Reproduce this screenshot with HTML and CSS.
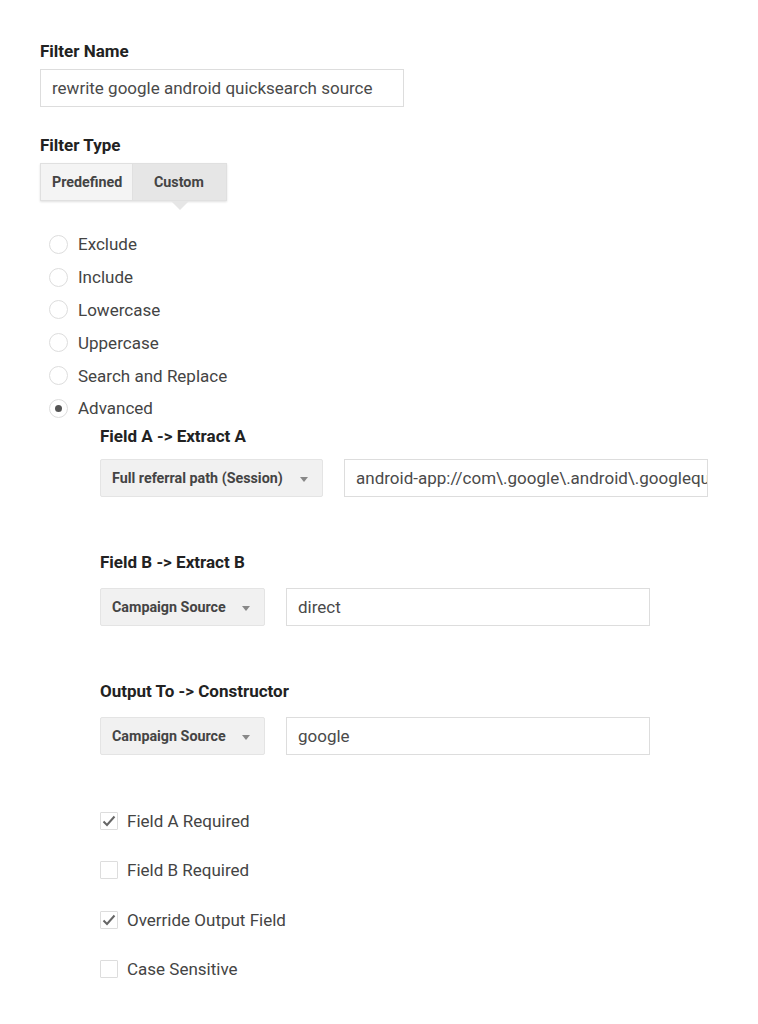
FILE: index.html
```html
<!DOCTYPE html>
<html>
<head>
<meta charset="utf-8">
<link rel="stylesheet" href="styles.css">
</head>
<body>
<div class="page">
  <div class="label">Filter Name</div>
  <div class="input name-input">rewrite google android quicksearch source</div>

  <div class="label type-label">Filter Type</div>
  <div class="tabs">
    <div class="tab">Predefined</div>
    <div class="tab active">Custom<span class="caret"></span></div>
  </div>

  <div class="radios">
    <div class="radio-row"><span class="radio"></span><span>Exclude</span></div>
    <div class="radio-row"><span class="radio"></span><span>Include</span></div>
    <div class="radio-row"><span class="radio"></span><span>Lowercase</span></div>
    <div class="radio-row"><span class="radio"></span><span>Uppercase</span></div>
    <div class="radio-row"><span class="radio"></span><span>Search and Replace</span></div>
    <div class="radio-row"><span class="radio checked"></span><span>Advanced</span></div>
  </div>

  <div class="advanced">
    <div class="label sub-label first">Field A -&gt; Extract A</div>
    <div class="field-row first-row">
      <div class="select wide">Full referral path (Session)<span class="arrow"></span></div>
      <div class="input field-input">android-app://com\.google\.android\.googlequicksearchbox</div>
    </div>

    <div class="label sub-label">Field B -&gt; Extract B</div>
    <div class="field-row">
      <div class="select">Campaign Source<span class="arrow"></span></div>
      <div class="input field-input">direct</div>
    </div>

    <div class="label sub-label">Output To -&gt; Constructor</div>
    <div class="field-row">
      <div class="select">Campaign Source<span class="arrow"></span></div>
      <div class="input field-input">google</div>
    </div>

    <div class="checks">
      <div class="check-row"><span class="box"><svg viewBox="0 0 18 18" width="18" height="18"><path d="M3.5 9.5 L7 13 L14.5 4.5" fill="none" stroke="#666" stroke-width="2"/></svg></span><span>Field A Required</span></div>
      <div class="check-row"><span class="box"></span><span>Field B Required</span></div>
      <div class="check-row"><span class="box"><svg viewBox="0 0 18 18" width="18" height="18"><path d="M3.5 9.5 L7 13 L14.5 4.5" fill="none" stroke="#666" stroke-width="2"/></svg></span><span>Override Output Field</span></div>
      <div class="check-row"><span class="box"></span><span>Case Sensitive</span></div>
    </div>
  </div>
</div>
</body>
</html>
```

FILE: styles.css
```css
html, body {
  margin: 0;
  padding: 0;
  background: #fff;
}
body {
  font-family: Roboto, "Liberation Sans", Arial, sans-serif;
  color: #444;
}
.page {
  padding: 41px 0 0 40px;
}
.label {
  font-size: 17px;
  font-weight: 700;
  color: #222;
  line-height: 20px;
}
.input {
  box-sizing: border-box;
  height: 38px;
  border: 1px solid #ddd;
  background: #fff;
  font-size: 17px;
  color: #4a4a4a;
  line-height: 36px;
  padding: 0 11px;
  white-space: nowrap;
  overflow: hidden;
  text-overflow: clip;
}
.name-input {
  width: 364px;
  margin-top: 8px;
}
.type-label {
  margin-top: 28px;
}
.tabs {
  display: flex;
  margin-top: 8px;
  width: max-content;
  box-shadow: 0 1px 2px rgba(0,0,0,0.12);
}
.tab {
  position: relative;
  box-sizing: border-box;
  height: 38px;
  line-height: 36px;
  font-size: 14.3px;
  font-weight: 700;
  color: #444;
  background: #f4f4f4;
  border: 1px solid #e0e0e0;
  padding: 0 0 0 11px;
  width: 93px;
}
.tab.active {
  background: #e6e6e6;
  border-left: none;
  width: 94px;
  padding-left: 21px;
}
.caret {
  position: absolute;
  left: 38px;
  bottom: -10px;
  width: 0;
  height: 0;
  border-left: 9px solid transparent;
  border-right: 9px solid transparent;
  border-top: 9px solid #e6e6e6;
}
.radios {
  margin-top: 27px;
  padding-left: 9px;
}
.radio-row {
  display: flex;
  align-items: center;
  height: 32.8px;
  font-size: 17px;
  color: #444;
}
.radio {
  box-sizing: border-box;
  width: 19px;
  height: 19px;
  border: 1px solid #ddd;
  border-radius: 50%;
  margin-right: 10px;
  display: flex;
  align-items: center;
  justify-content: center;
  background: #fff;
}
.radio.checked::after {
  content: "";
  width: 7px;
  height: 7px;
  border-radius: 50%;
  background: #555;
}
.advanced {
  padding-left: 60px;
}
.sub-label {
  margin-top: 55px;
}
.sub-label.first {
  margin-top: 1px;
}
.field-row {
  display: flex;
  align-items: center;
  gap: 21px;
  margin-top: 16px;
}
.field-row.first-row {
  margin-top: 13px;
}
.select {
  position: relative;
  box-sizing: border-box;
  height: 38px;
  line-height: 36px;
  width: 165px;
  background: #f1f1f1;
  border: 1px solid #e4e4e4;
  border-radius: 2px;
  font-size: 14.3px;
  font-weight: 700;
  color: #444;
  padding-left: 11px;
}
.select.wide {
  width: 223px;
}
.arrow {
  position: absolute;
  right: 14px;
  top: 17px;
  width: 0;
  height: 0;
  border-left: 4px solid transparent;
  border-right: 4px solid transparent;
  border-top: 5px solid #888;
}
.field-input {
  width: 364px;
}
.checks {
  margin-top: 41px;
}
.check-row {
  display: flex;
  align-items: center;
  height: 49.5px;
  font-size: 17px;
  color: #444;
}
.box {
  box-sizing: border-box;
  width: 18px;
  height: 18px;
  border: 1px solid #ddd;
  border-radius: 1px;
  margin-right: 9px;
  display: flex;
}
.box svg {
  margin: -1px;
}
```
